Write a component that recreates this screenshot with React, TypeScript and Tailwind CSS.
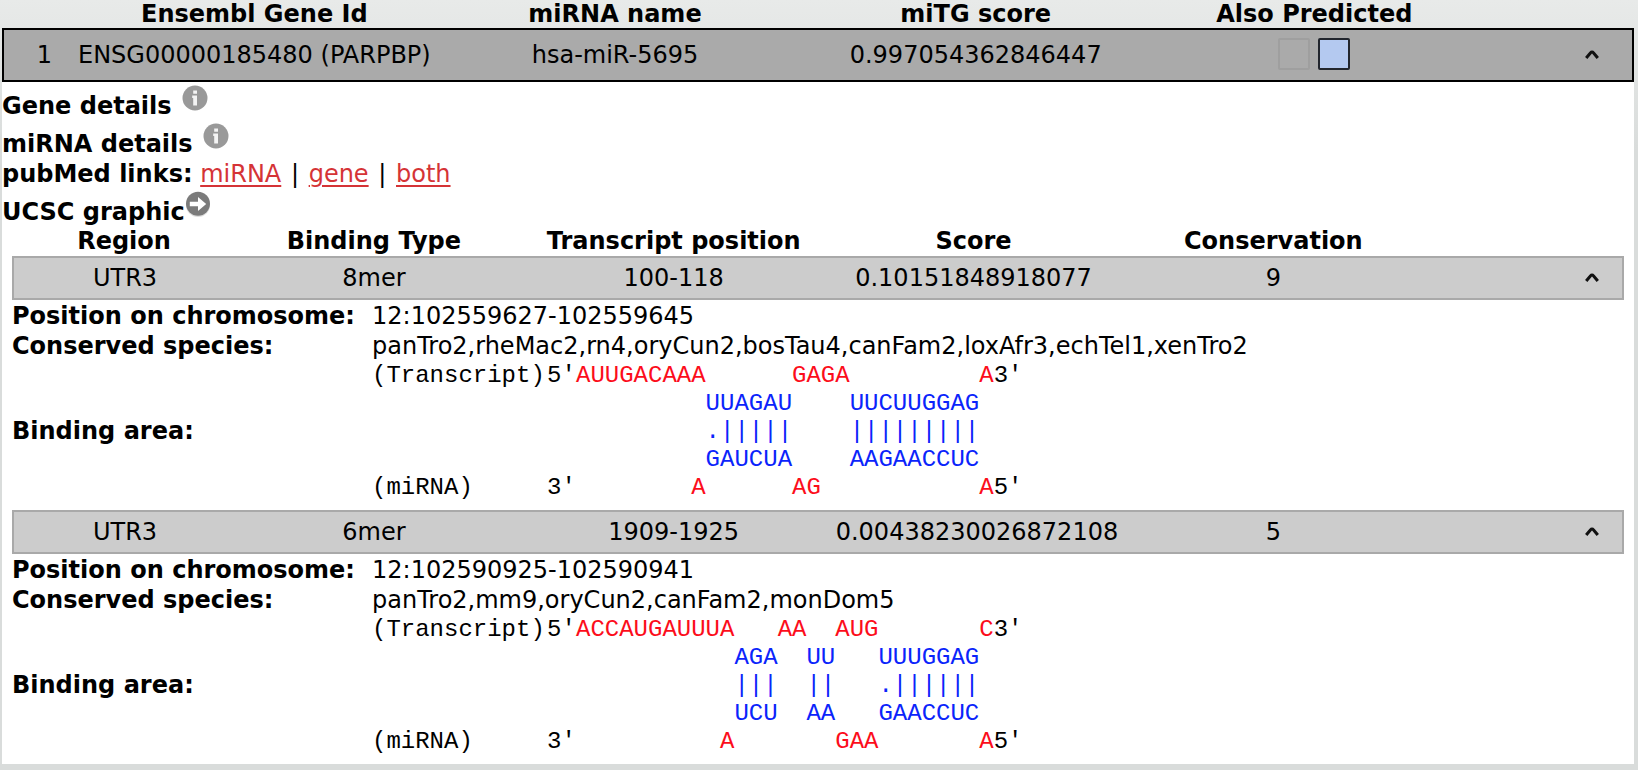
import React, { useState } from "react";

type Segment = { text: string; tone: "red" | "blue" | "black" };
type Line = { label: string; end: string; segments: Segment[] };
type Site = {
  region: string;
  type: string;
  position: string;
  score: string;
  conservation: string;
  chromosome: string;
  species: string;
  lines: Line[];
};

const tones = {
  red: "text-[#fc0d1b]",
  blue: "text-[#0b24fb]",
  black: "text-black",
};

function duplex(
  top: string,
  upper: string,
  bonds: string,
  lower: string,
  bottom: string,
): Line[] {
  return [
    {
      label: "(Transcript)",
      end: "5'",
      segments: [
        { text: top, tone: "red" },
        { text: "3'", tone: "black" },
      ],
    },
    { label: "", end: "", segments: [{ text: upper, tone: "blue" }] },
    { label: "", end: "", segments: [{ text: bonds, tone: "blue" }] },
    { label: "", end: "", segments: [{ text: lower, tone: "blue" }] },
    {
      label: "(miRNA)",
      end: "3'",
      segments: [
        { text: bottom, tone: "red" },
        { text: "5'", tone: "black" },
      ],
    },
  ];
}

const sites: Site[] = [
  {
    region: "UTR3",
    type: "8mer",
    position: "100-118",
    score: "0.10151848918077",
    conservation: "9",
    chromosome: "12:102559627-102559645",
    species: "panTro2,rheMac2,rn4,oryCun2,bosTau4,canFam2,loxAfr3,echTel1,xenTro2",
    lines: duplex(
      "AUUGACAAA      GAGA         A",
      "         UUAGAU    UUCUUGGAG",
      "         .|||||    |||||||||",
      "         GAUCUA    AAGAACCUC",
      "        A      AG           A",
    ),
  },
  {
    region: "UTR3",
    type: "6mer",
    position: "1909-1925",
    score: "0.00438230026872108",
    conservation: "5",
    chromosome: "12:102590925-102590941",
    species: "panTro2,mm9,oryCun2,canFam2,monDom5",
    lines: duplex(
      "ACCAUGAUUUA   AA  AUG       C",
      "           AGA  UU   UUUGGAG",
      "           |||  ||   .||||||",
      "           UCU  AA   GAACCUC",
      "          A       GAA       A",
    ),
  },
];

function ToggleButton({ open, onClick }: { open: boolean; onClick: () => void }) {
  return (
    <button
      type="button"
      aria-label={open ? "Collapse row" : "Expand row"}
      aria-expanded={open}
      onClick={onClick}
      className="block cursor-pointer"
    >
      <svg
        viewBox="0 0 16 16"
        className={open ? "size-4" : "size-4 rotate-180"}
        fill="none"
        stroke="#111"
        strokeWidth="3"
      >
        <path d="M2.2 11 L6.4 6 Q8 4.2 9.6 6 L13.8 11" />
      </svg>
    </button>
  );
}

function InfoIcon() {
  return (
    <svg viewBox="0 0 26 26" className="size-[26px]" aria-hidden="true">
      <circle cx="13" cy="13" r="12.5" fill="#999" />
      <path d="M11.2 5.6h3.8v3.2h-3.8z M10.2 10.6h4.8v9.8h-3.8v-7.4h-1z" fill="#f4f4f4" />
    </svg>
  );
}

function ArrowIcon() {
  return (
    <svg viewBox="0 0 26 26" className="size-[26px]" aria-hidden="true">
      <circle cx="13" cy="14" r="12" fill="#ddd" />
      <circle cx="13" cy="12.8" r="12" fill="#7b7b7b" />
      <path d="M4.8 10.8h8.2V6l8.2 7-8.2 7v-4.8H4.8z" fill="#fff" />
    </svg>
  );
}

function SiteRows({ site }: { site: Site }) {
  const [open, setOpen] = useState(true);
  const cell = "h-11 border-y-2 border-[#a9a9a9] bg-[#ccc] p-0";
  return (
    <>
      <tr className="text-center">
        <td className={`${cell} border-l-2`}>{site.region}</td>
        <td className={cell}>{site.type}</td>
        <td className={cell}>{site.position}</td>
        <td className={cell}>{site.score}</td>
        <td className={cell}>{site.conservation}</td>
        <td className={`${cell} border-r-2`}>
          <div className="flex justify-end pr-[22px]">
            <ToggleButton open={open} onClick={() => setOpen(!open)} />
          </div>
        </td>
      </tr>
      {open && (
        <tr>
          <td colSpan={6} className="p-0">
            <dl className="grid grid-cols-[360px_1fr] items-center pt-px">
              <dt className="font-bold">Position on chromosome:</dt>
              <dd>{site.chromosome}</dd>
              <dt className="font-bold">Conserved species:</dt>
              <dd>{site.species}</dd>
              <dt className="pb-2.5 font-bold">Binding area:</dt>
              <dd className="pt-px pb-2 font-['Liberation_Mono','Courier_New',monospace] leading-7 whitespace-pre">
                {site.lines.map((line, i) => (
                  <div key={i} className="flex h-7">
                    <span className="w-[175px] shrink-0">{line.label}</span>
                    <span className="w-[29px] shrink-0">{line.end}</span>
                    <span>
                      {line.segments.map((s, j) => (
                        <span key={j} className={tones[s.tone]}>
                          {s.text}
                        </span>
                      ))}
                    </span>
                  </div>
                ))}
              </dd>
            </dl>
          </td>
        </tr>
      )}
    </>
  );
}

export default function App() {
  const [open, setOpen] = useState(true);
  const cell = "h-[54px] border-y-2 border-black bg-[#aaa] p-0";
  const link = "text-[#d53336] underline decoration-2 underline-offset-3";
  return (
    <main className="min-h-screen bg-[linear-gradient(#e8eae9,#d9dcdb_150px)] pr-1 pb-1.5 pl-0.5 font-['DejaVu_Sans',Verdana,sans-serif] text-[24px] leading-[30px] text-black">
      <table className="w-full table-fixed border-separate border-spacing-0">
        <colgroup>
          <col className="w-[72px]" />
          <col className="w-[22.1%]" />
          <col className="w-[22.1%]" />
          <col className="w-[22.1%]" />
          <col className="w-[19.4%]" />
          <col />
        </colgroup>
        <thead>
          <tr className="leading-7">
            <td className="p-0" />
            <th className="p-0">Ensembl Gene Id</th>
            <th className="p-0">miRNA name</th>
            <th className="p-0">miTG score</th>
            <th className="p-0">Also Predicted</th>
            <td className="p-0" />
          </tr>
        </thead>
        <tbody>
          <tr className="text-center">
            <td className={`${cell} border-l-2 pr-[22px] text-right`}>1</td>
            <td className={cell}>ENSG00000185480 (PARPBP)</td>
            <td className={cell}>hsa-miR-5695</td>
            <td className={cell}>0.997054362846447</td>
            <td className={cell}>
              <div className="flex justify-center gap-2 pb-0.5">
                <span className="size-8 rounded-xs border-2 border-[#9f9f9f]" />
                <span className="size-8 rounded-xs border-2 border-[#22262e] bg-[#b4c9f0]" />
              </div>
            </td>
            <td className={`${cell} border-r-2`}>
              <div className="flex justify-end pr-8">
                <ToggleButton open={open} onClick={() => setOpen(!open)} />
              </div>
            </td>
          </tr>
          {open && (
            <tr>
              <td colSpan={6} className="bg-white p-0 pt-px">
                <div className="flex h-[38px] items-start gap-2.5">
                  <b className="self-end">Gene details</b>
                  <button type="button" aria-label="Show gene details" className="mt-0.5">
                    <InfoIcon />
                  </button>
                </div>
                <div className="flex h-[38px] items-start gap-2.5">
                  <b className="self-end">miRNA details</b>
                  <button type="button" aria-label="Show miRNA details" className="mt-0.5">
                    <InfoIcon />
                  </button>
                </div>
                <div>
                  <b>pubMed links:</b> <a href="#mirna" className={link}>miRNA</a>{" "}
                  <span className="px-0.5">|</span>{" "}
                  <a href="#gene" className={link}>gene</a>{" "}
                  <span className="px-0.5">|</span>{" "}
                  <a href="#both" className={link}>both</a>
                </div>
                <div className="flex h-[38px] items-start">
                  <b className="self-end">UCSC graphic</b>
                  <a href="#ucsc" aria-label="Open UCSC graphic" className="mt-0.5">
                    <ArrowIcon />
                  </a>
                </div>
                <div className="px-2.5">
                  <table className="w-full table-fixed border-separate border-spacing-0">
                    <colgroup>
                      <col className="w-[13.9%]" />
                      <col className="w-[17.1%]" />
                      <col className="w-[20.1%]" />
                      <col className="w-[17.1%]" />
                      <col className="w-[20.1%]" />
                      <col />
                    </colgroup>
                    <thead>
                      <tr className="leading-[29px]">
                        <th className="p-0">Region</th>
                        <th className="p-0">Binding Type</th>
                        <th className="p-0">Transcript position</th>
                        <th className="p-0">Score</th>
                        <th className="p-0">Conservation</th>
                        <td className="p-0" />
                      </tr>
                    </thead>
                    <tbody>
                      {sites.map((site) => (
                        <SiteRows key={site.chromosome} site={site} />
                      ))}
                    </tbody>
                  </table>
                </div>
              </td>
            </tr>
          )}
        </tbody>
      </table>
    </main>
  );
}
